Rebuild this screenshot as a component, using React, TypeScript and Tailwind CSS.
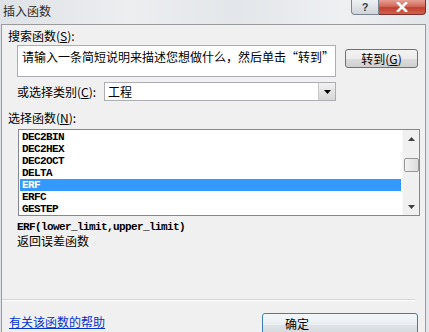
import { Fragment } from 'react';

const FUNCS = ['DEC2BIN', 'DEC2HEX', 'DEC2OCT', 'DELTA', 'ERF', 'ERFC', 'GESTEP'];
const SELECTED = 'ERF';

const cjk = "font-['SimSun','Noto_Sans_CJK_SC',sans-serif]";
const mono = "font-['Liberation_Mono',monospace]";

const btnBg =
  'bg-[linear-gradient(#f3f3f3_0%,#ececec_50%,#dddddd_51%,#cfcfcf_100%)]';

// label with access key underlined, e.g. 搜索函数(S):
const Label = ({ text, hotkey }: { text: string; hotkey: string }) => (
  <Fragment>
    {text}(<span className="underline">{hotkey}</span>):
  </Fragment>
);

const App = () => {
  return (
    <div
      className={`relative w-[429px] h-[332px] overflow-hidden flex flex-col bg-[linear-gradient(90deg,#dfe2e6_0%,#eceef0_30%,#e3e6ea_55%,#eef0f2_80%,#e2e5e9_100%)] ${cjk} text-[12px] leading-[12px] text-black`}
    >
      {/* Title bar */}
      <div className="h-[24px] flex items-start shrink-0">
        <div className="pl-[3px] pt-[5px] text-[#2b2b2b]">插入函数</div>
        <div className="ml-auto mr-[3px] flex">
          <div className="w-[28px] h-[15px] rounded-bl-[4px] border border-t-0 border-[#7c8590] bg-[linear-gradient(#eef1f4,#cfd4da)] flex items-center justify-center text-[11px] text-[#39434f] font-['Liberation_Sans',sans-serif] font-bold">
            ?
          </div>
          <div className="w-[47px] h-[15px] rounded-br-[4px] border border-t-0 border-l-0 border-[#7a2f2a] bg-[linear-gradient(#e7a095_0%,#d2695a_45%,#c1412f_55%,#d0624f_100%)] flex items-center justify-center">
            <svg width="12" height="10" viewBox="0 0 12 10">
              <path d="M2 1 L10 9 M10 1 L2 9" stroke="#ffffff" strokeWidth="2.6" strokeLinecap="square" />
            </svg>
          </div>
        </div>
      </div>

      {/* Dialog body */}
      <div className="ml-[1px] mr-[3px] flex-1 border-l border-t border-r border-[#9a9a9a] bg-[#f0f0f0] flex flex-col">
        <div className="mt-[5px] pl-[6px]">
          <Label text="搜索函数" hotkey="S" />
        </div>

        <div className="mt-[3px] flex items-start">
          <div className="ml-[15px] w-[319px] h-[32px] border border-[#abadb3] bg-white px-[4px] pt-[5px] overflow-hidden whitespace-nowrap">
            请输入一条简短说明来描述您想做什么，然后单击“转到”
          </div>
          <div
            className={`ml-[9px] mt-[4px] w-[73px] h-[19px] border border-[#707070] rounded-[3px] ${btnBg} flex items-center justify-center`}
          >
            转到(<span className="underline">G</span>)
          </div>
        </div>

        <div className="mt-[5px] flex items-center">
          <div className="ml-[15px] w-[87px]">
            <Label text="或选择类别" hotkey="C" />
          </div>
          <div className="w-[232px] h-[19px] border border-[#abadb3] bg-white flex items-center">
            <div className="pl-[3px] flex-1">工程</div>
            <div className="w-[17px] h-[17px] border-l border-[#c9c9c9] bg-[linear-gradient(#f2f2f2,#d6d6d6)] flex items-center justify-center">
              <svg width="7" height="4" viewBox="0 0 7 4">
                <path d="M0 0 H7 L3.5 4 Z" fill="#000" />
              </svg>
            </div>
          </div>
        </div>

        <div className="mt-[11px] pl-[6px]">
          <Label text="选择函数" hotkey="N" />
        </div>

        {/* Function list */}
        <div className="mt-[5px] ml-[16px] w-[402px] h-[87px] border border-[#828790] bg-white flex">
          <div className={`flex-1 pt-[1px] px-[1px] ${mono} font-bold text-[11px] leading-[12px] tracking-[-0.6px]`}>
            {FUNCS.map((f) => (
              <div
                key={f}
                className={`h-[12px] pl-[2px] ${f === SELECTED ? 'bg-[#3399ff] text-white' : 'text-black'}`}
              >
                {f}
              </div>
            ))}
          </div>
          <div className="w-[17px] bg-[#f0f0f0] flex flex-col items-center border-l border-[#f7f7f7]">
            <div className="h-[17px] flex items-center justify-center">
              <svg width="7" height="4" viewBox="0 0 7 4">
                <path d="M0 4 H7 L3.5 0 Z" fill="#404040" />
              </svg>
            </div>
            <div className="mt-[11px] w-[15px] h-[14px] rounded-[2px] border border-[#989898] bg-[linear-gradient(90deg,#f2f2f2,#dcdcdc)]" />
            <div className="mt-auto h-[17px] flex items-center justify-center">
              <svg width="7" height="4" viewBox="0 0 7 4">
                <path d="M0 0 H7 L3.5 4 Z" fill="#404040" />
              </svg>
            </div>
          </div>
        </div>

        <div className={`mt-[5px] pl-[15px] ${mono} font-bold text-[11px] leading-[12px] tracking-[-0.6px]`}>
          ERF(lower_limit,upper_limit)
        </div>
        <div className="mt-[2px] pl-[15px]">返回误差函数</div>

        <div className="mt-[52px] mr-[10px] h-[2px] border-t border-[#d5d5d5] border-b border-b-white" />

        <div className="mt-[12px] flex items-start">
          <div className="pl-[7px] pt-[3px] text-[#0033cc] underline">有关该函数的帮助</div>
          <div className="ml-auto mr-[7px] w-[156px] h-[24px] border border-[#3c7fb1] rounded-[3px] bg-[linear-gradient(#f3f7fa_0%,#eaeef2_50%,#dde2e6_51%,#d2d8dd_100%)] pl-[22px] pt-[4px]">
            确定
          </div>
        </div>
      </div>
    </div>
  );
};

export default App;
